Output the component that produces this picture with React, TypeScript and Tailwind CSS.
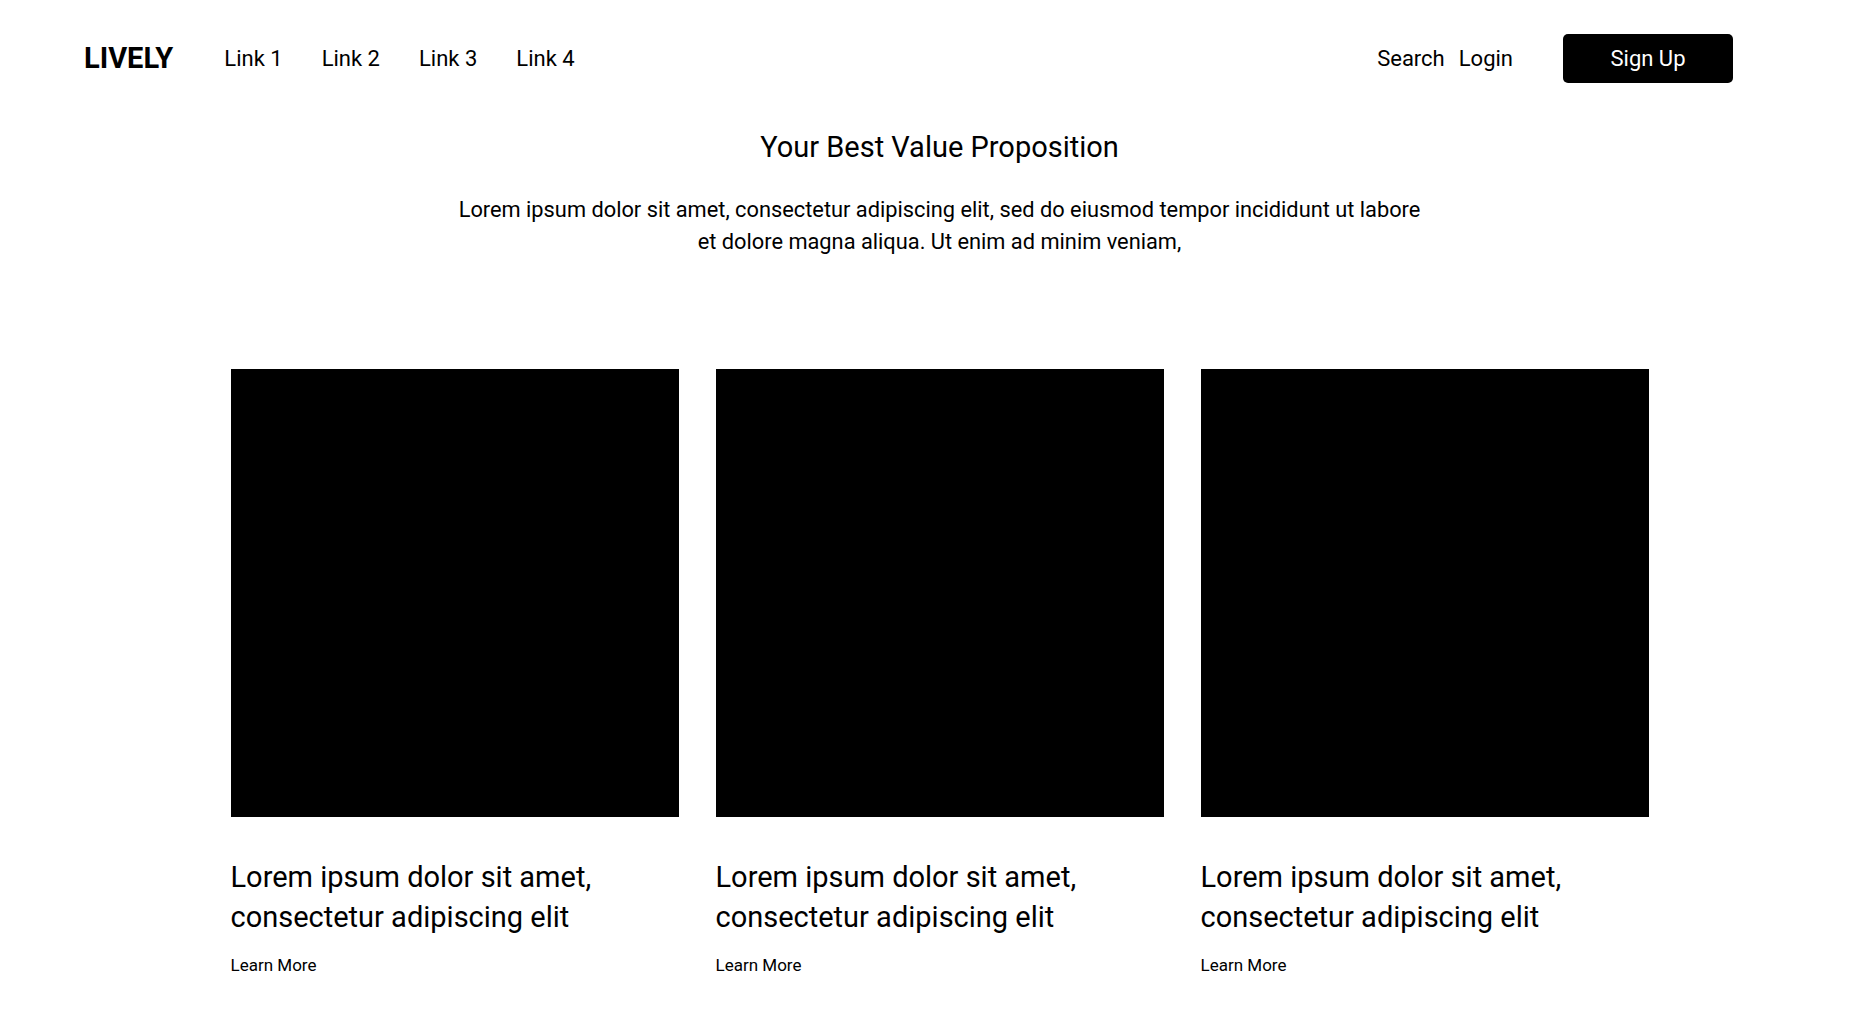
import React from 'react';

const links = ['Link 1', 'Link 2', 'Link 3', 'Link 4'];

const cards = [1, 2, 3];

export default function App() {
    return (
        <div className="min-h-screen bg-white text-black" style={{ fontFamily: 'Roboto, "Noto Sans", sans-serif' }}>
            {/* Top nav */}
            <nav className="flex items-center justify-between pt-[34px] pl-[84px] pr-[119px]">
                <div className="flex items-center">
                    <span className="text-[29px] font-bold leading-none">LIVELY</span>
                    <div className="ml-[51px] flex items-center gap-[39px]">
                        {links.map((l) => (
                            <a key={l} href="#" className="text-[22px] leading-none">{l}</a>
                        ))}
                    </div>
                </div>
                <div className="flex items-center">
                    <a href="#" className="text-[22px] leading-none">Search</a>
                    <a href="#" className="ml-[14px] text-[22px] leading-none">Login</a>
                    <button className="ml-[50px] h-[49px] w-[170px] rounded-[5px] bg-black text-[22px] text-white">
                        Sign Up
                    </button>
                </div>
            </nav>

            {/* Hero */}
            <main className="flex flex-col items-center pl-[27px]">
                <h1 className="mt-[47px] text-[29px] leading-[34px]">Your Best Value Proposition</h1>
                <p className="mt-[30px] text-center text-[21.8px] leading-[32px]">
                    Lorem ipsum dolor sit amet, consectetur adipiscing elit, sed do eiusmod tempor incididunt ut labore
                    <br />
                    et dolore magna aliqua. Ut enim ad minim veniam,
                </p>

                {/* Cards */}
                <div className="mt-[111px] grid grid-cols-3 gap-[37px]">
                    {cards.map((c) => (
                        <div key={c} className="w-[448px]">
                            <div className="h-[448px] w-[448px] bg-black" />
                            <h3 className="mt-[40px] text-[29px] leading-[40px]">
                                Lorem ipsum dolor sit amet,
                                <br />
                                consectetur adipiscing elit
                            </h3>
                            <a href="#" className="mt-[16px] block text-[17px] leading-[24px]">Learn More</a>
                        </div>
                    ))}
                </div>
            </main>
        </div>
    );
}
